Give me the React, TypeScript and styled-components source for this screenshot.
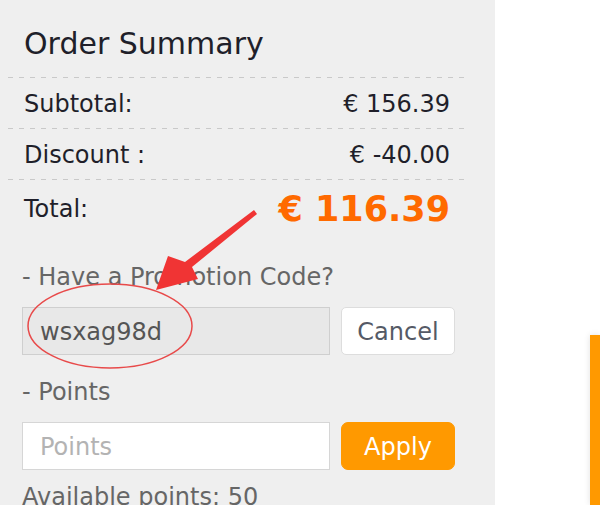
import React from "react";
import styled, { createGlobalStyle } from "styled-components";

const GlobalStyle = createGlobalStyle`
  html, body { margin: 0; padding: 0; background: #ffffff; }
  body { font-family: "DejaVu Sans", Verdana, sans-serif; }
  * { box-sizing: border-box; }
`;

const Page = styled.div`
  position: relative;
  display: flex;
  width: 600px;
  height: 505px;
  overflow: hidden;
`;

const Panel = styled.section`
  width: 495px;
  flex: none;
  height: 505px;
  background: #efefef;
  padding: 25px 0 0 8px;
  display: flex;
  flex-direction: column;
`;

const Title = styled.h2`
  margin: 0;
  padding-left: 16px;
  font-size: 30px;
  line-height: 37px;
  font-weight: normal;
  color: #1f1f2a;
`;

const Summary = styled.div`
  width: 458px;
  margin-top: 15px;
  display: flex;
  flex-direction: column;
`;

const Divider = styled.div`
  height: 1px;
  background-image: repeating-linear-gradient(to right, #c9c9c9 0 5px, transparent 5px 11px);
`;

const Row = styled.div<{ $tall?: boolean }>`
  display: flex;
  align-items: center;
  justify-content: space-between;
  padding: ${(p) => (p.$tall ? "3px 16px 0" : "2px 16px 0")};
  height: ${(p) => (p.$tall ? "54px" : "50px")};
  font-size: 24px;
  color: #1f1f2a;
`;

const Amount = styled.span<{ $total?: boolean }>`
  font-size: ${(p) => (p.$total ? "35px" : "24px")};
  font-weight: ${(p) => (p.$total ? "bold" : "normal")};
  color: ${(p) => (p.$total ? "#ff6a00" : "#1f1f2a")};
`;

const Form = styled.div`
  padding-left: 14px;
  width: 447px;
  display: flex;
  flex-direction: column;
`;

const Label = styled.div<{ $top: number }>`
  margin-top: ${(p) => p.$top}px;
  font-size: 24px;
  line-height: 28px;
  color: #666;
`;

const FieldRow = styled.div`
  margin-top: 16px;
  display: flex;
  gap: 11px;
  height: 48px;
`;

const Input = styled.input<{ $locked?: boolean }>`
  width: 308px;
  height: 48px;
  border: 1px solid ${(p) => (p.$locked ? "#cfcfcf" : "#d6d6d6")};
  background: ${(p) => (p.$locked ? "#e8e8e8" : "#ffffff")};
  padding: 2px 0 0 17px;
  font-family: "DejaVu Sans", Verdana, sans-serif;
  font-size: 24px;
  color: #555;
  outline: none;
  &::placeholder { color: #b3b3b3; }
`;

const Button = styled.button<{ $primary?: boolean }>`
  width: 114px;
  height: 48px;
  border-radius: ${(p) => (p.$primary ? "7px" : "5px")};
  border: 1px solid ${(p) => (p.$primary ? "#ff9900" : "#dddddd")};
  background: ${(p) => (p.$primary ? "#ff9900" : "#ffffff")};
  color: ${(p) => (p.$primary ? "#ffffff" : "#555a66")};
  font-family: "DejaVu Sans", Verdana, sans-serif;
  font-size: 24px;
  padding: 2px 0 0;
`;

const Side = styled.aside`
  flex: 1;
  display: flex;
  justify-content: flex-end;
  padding-top: 335px;
`;

const OrangeCard = styled.div`
  width: 10px;
  background: #ff9900;
  box-shadow: 0 0 6px rgba(0, 0, 0, 0.12);
`;

const Annotation = styled.svg`
  position: absolute;
  left: 0;
  top: 0;
  pointer-events: none;
`;

export default function App() {
  return (
    <>
      <GlobalStyle />
      <Page>
        <Panel>
          <Title>Order Summary</Title>
          <Summary>
            <Divider />
            <Row>
              <span>Subtotal:</span>
              <Amount>€ 156.39</Amount>
            </Row>
            <Divider />
            <Row>
              <span>Discount :</span>
              <Amount>€ -40.00</Amount>
            </Row>
            <Divider />
            <Row $tall>
              <span>Total:</span>
              <Amount $total>€ 116.39</Amount>
            </Row>
          </Summary>
          <Form>
            <Label $top={29}>- Have a Promotion Code?</Label>
            <FieldRow>
              <Input $locked readOnly value="wsxag98d" />
              <Button>Cancel</Button>
            </FieldRow>
            <Label $top={23}>- Points</Label>
            <FieldRow>
              <Input placeholder="Points" />
              <Button $primary>Apply</Button>
            </FieldRow>
            <Label $top={13}>Available points: 50</Label>
          </Form>
        </Panel>
        <Side>
          <OrangeCard />
        </Side>
        <Annotation width="600" height="505" viewBox="0 0 600 505">
          <ellipse cx="110" cy="326" rx="82" ry="42" fill="none" stroke="#e84a4a" strokeWidth="1.5" />
          <polygon
            points="254,210 257,214 192,267 198,279 156,290 168,256 185,262"
            fill="#f03434"
          />
        </Annotation>
      </Page>
    </>
  );
}
